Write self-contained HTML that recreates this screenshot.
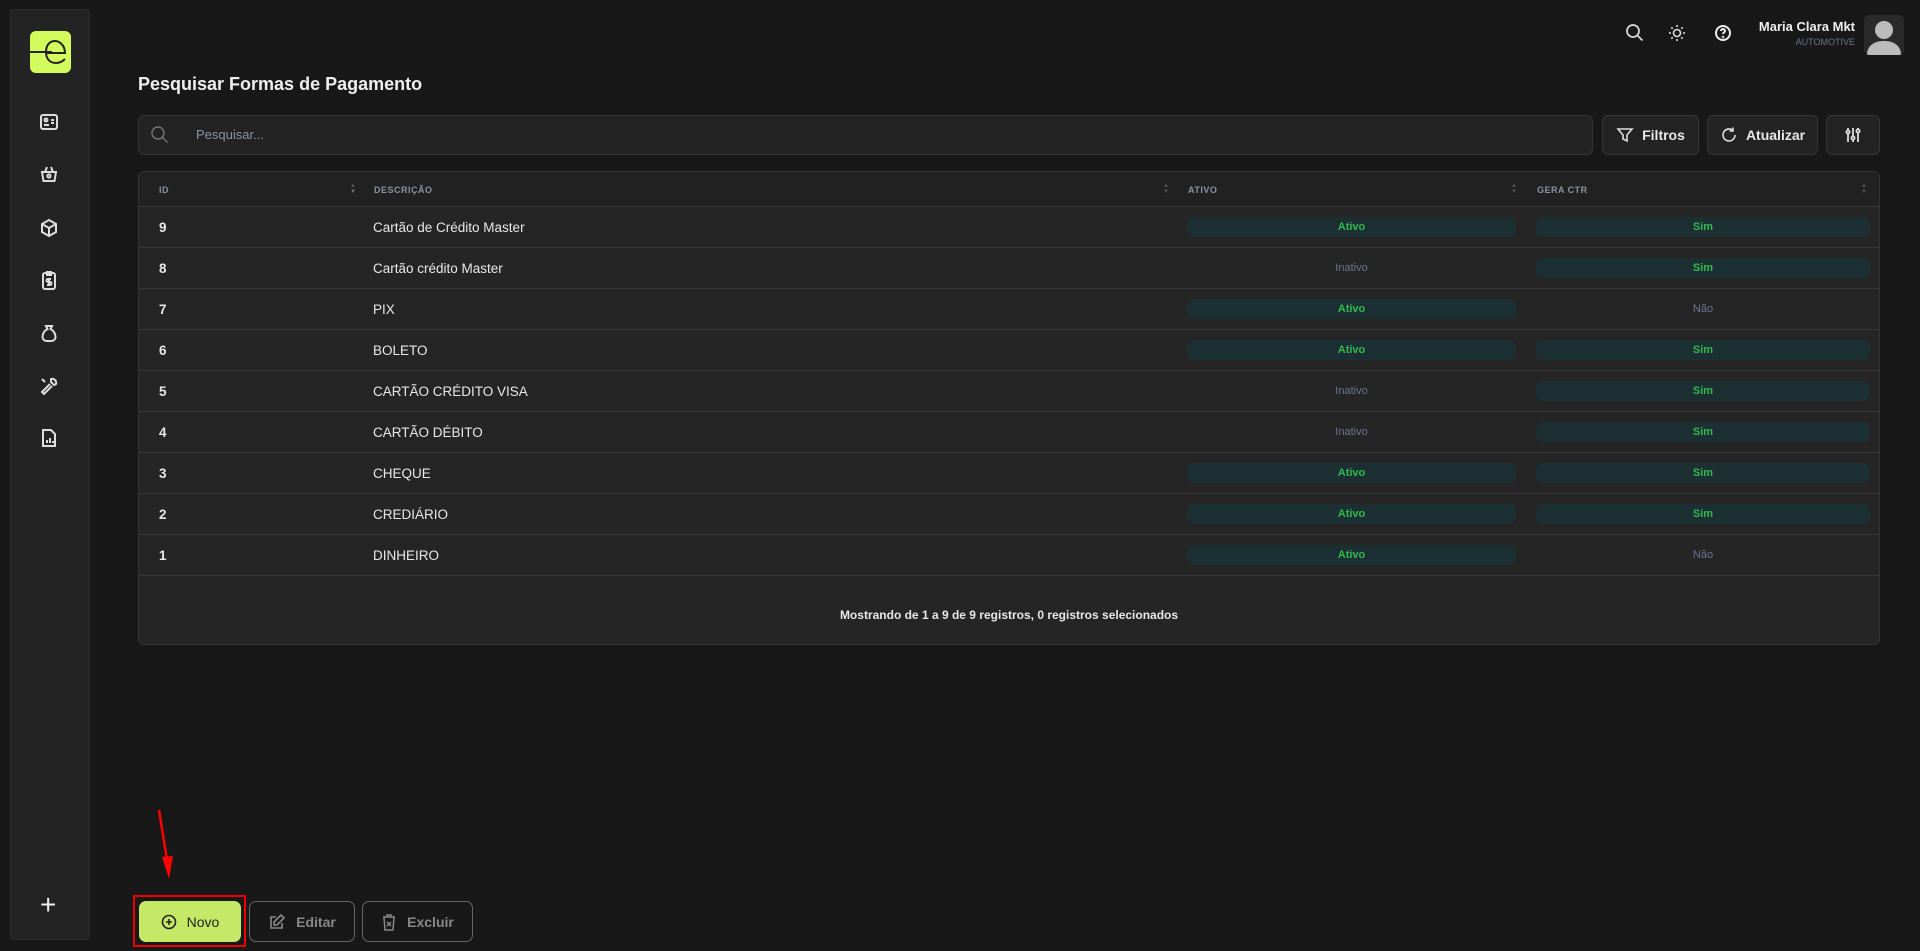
<!DOCTYPE html>
<html><head><meta charset="utf-8"><style>
*{box-sizing:border-box;margin:0;padding:0}
body{width:1920px;height:951px;background:#181818;font-family:"Liberation Sans",sans-serif;color:#e8e8e8;position:relative;overflow:hidden}
.abs{position:absolute}
.side{left:10px;top:9px;width:80px;height:931px;background:#232323;border:1px solid #2c2c2c;border-radius:4px}
.logo{left:30px;top:31px;width:41px;height:42px;background:#d4fb5c;border-radius:6px}
.ic{position:absolute;left:38px;width:22px;height:22px}
.btn{position:absolute;top:115px;height:40px;border:1px solid #363636;background:#232323;border-radius:6px;display:flex;align-items:center;justify-content:center;gap:8px;font-size:14px;font-weight:bold;color:#e8e8e8}
.table{left:138px;top:171px;width:1742px;height:474px;background:#252525;border:1px solid #343434;border-radius:6px;overflow:hidden}
.hd{position:absolute;top:0;left:0;right:0;height:35px;background:#212121;border-bottom:1px solid #383838;font-size:9px;color:#8a93a4;letter-spacing:.5px;font-weight:bold}
.hd span{position:absolute;top:13px}
.row{position:absolute;left:0;right:0;height:41px;border-bottom:1px solid #383838;font-size:13.5px}
.row .id{position:absolute;left:20px;top:13px;font-weight:bold}
.row .d{position:absolute;left:234px;top:13px}
.pill{position:absolute;top:10px;height:20px;border-radius:7px;font-size:11px;font-weight:bold;text-align:center;line-height:20px}
.p1{left:1048px;width:329px}.p2{left:1397px;width:334px}
.on{background:#1c3034;color:#31b94c}
.off{color:#6b7690;font-weight:normal}
.sort{position:absolute;top:11px;width:6px;color:#555;font-size:6px;line-height:6px}
.bb{position:absolute;top:901px;height:41px;border-radius:7px;display:flex;align-items:center;justify-content:center;gap:10px;font-size:14px;font-weight:bold}
</style></head><body>
<div class="abs side"></div>
<div class="abs logo"><svg width="41" height="42" viewBox="0 0 41 42"><line x1="0" y1="21" x2="22" y2="21" stroke="#222" stroke-width="2"/><path d="M17 22 H35 C35 14 29 10 25 10 C19 10 16 15 16 21 C16 28 20 32 26 32 C29 32 32 31 35 28" fill="none" stroke="#222" stroke-width="2"/></svg></div>
<svg class="ic" style="top:111px" viewBox="0 0 22 22" fill="none" stroke="#ddd" stroke-width="2"><rect x="3" y="4" width="16" height="14" rx="2"/><circle cx="8" cy="9" r="1.5"/><path d="M6 14h5M13 9h3M13 12h3"/></svg>
<svg class="ic" style="top:163px" viewBox="0 0 22 22" fill="none" stroke="#ddd" stroke-width="2"><path d="M4 9h14l-1.5 9h-11z"/><path d="M7 9l2-5M15 9l-2-5"/><circle cx="11" cy="13" r="1.6"/></svg>
<svg class="ic" style="top:217px" viewBox="0 0 22 22" fill="none" stroke="#ddd" stroke-width="2"><path d="M11 3l7 4v8l-7 4-7-4V7z"/><path d="M4 7l7 4 7-4M11 11v8"/></svg>
<svg class="ic" style="top:269px" viewBox="0 0 22 22" fill="none" stroke="#ddd" stroke-width="2"><rect x="5" y="4" width="12" height="16" rx="2"/><path d="M9 3h4v3H9zM13 10h-3a1.2 1.2 0 000 3h2a1.2 1.2 0 010 3H9M11 9v8"/></svg>
<svg class="ic" style="top:322px" viewBox="0 0 22 22" fill="none" stroke="#ddd" stroke-width="2"><path d="M8 4h6l-1.5 3c4 2 5 6 5 8a4 4 0 01-4 4H8.5a4 4 0 01-4-4c0-2 1-6 5-8z"/></svg>
<svg class="ic" style="top:375px" viewBox="0 0 22 22" fill="none" stroke="#ddd" stroke-width="2"><path d="M13 4a4 4 0 015 5l-2 1-3-3zM12 9l-8 8 2 2 8-8M4 4l3 3"/></svg>
<svg class="ic" style="top:427px" viewBox="0 0 22 22" fill="none" stroke="#ddd" stroke-width="2"><path d="M5 3h8l4 4v12H5z"/><path d="M9 16v-3M12 16v-5M15 16v-2"/></svg>
<div class="abs" style="left:40px;top:889px;font-size:28px;color:#eee;font-weight:300">+</div>

<svg class="abs" style="left:1625px;top:23px" width="20" height="20" viewBox="0 0 20 20" fill="none" stroke="#ddd" stroke-width="1.7"><circle cx="8" cy="8" r="6"/><path d="M12.5 12.5l5 5"/></svg>
<svg class="abs" style="left:1667px;top:23px" width="20" height="20" viewBox="0 0 20 20" fill="none" stroke="#ddd" stroke-width="1.6"><circle cx="10" cy="10" r="3.5"/><path d="M10 2v2M10 16v2M2 10h2M16 10h2M4.3 4.3l1.4 1.4M14.3 14.3l1.4 1.4M4.3 15.7l1.4-1.4M14.3 5.7l1.4-1.4"/></svg>
<svg class="abs" style="left:1713px;top:23px" width="20" height="20" viewBox="0 0 20 20" fill="none" stroke="#eee" stroke-width="2"><circle cx="10" cy="10" r="7"/><path d="M8 8a2 2 0 114 0c0 1.5-2 1.5-2 3"/><circle cx="10" cy="14" r=".4"/></svg>
<div class="abs" style="right:65px;top:19px;font-size:13px;font-weight:bold;color:#eee">Maria Clara Mkt</div>
<div class="abs" style="right:65px;top:37px;font-size:9px;color:#6b7690">AUTOMOTIVE</div>
<div class="abs" style="left:1864px;top:15px;width:40px;height:40px;background:#2a2a2a;border-radius:5px;overflow:hidden"><svg width="40" height="40" viewBox="0 0 40 40"><circle cx="20" cy="15" r="9" fill="#bbb"/><path d="M3 40c0-10 8-14 17-14s17 4 17 14z" fill="#bbb"/></svg></div>

<div class="abs" style="left:138px;top:74px;font-size:18px;font-weight:bold;color:#eee">Pesquisar Formas de Pagamento</div>
<div class="abs" style="left:138px;top:115px;width:1455px;height:40px;background:#232323;border:1px solid #333;border-radius:6px"></div>
<svg class="abs" style="left:150px;top:125px" width="20" height="20" viewBox="0 0 20 20" fill="none" stroke="#777" stroke-width="1.4"><circle cx="8" cy="8" r="6"/><path d="M12.5 12.5l5 5"/></svg>
<div class="abs" style="left:196px;top:127px;font-size:13px;color:#8a93a4">Pesquisar...</div>
<div class="btn" style="left:1602px;width:97px"><svg width="18" height="18" viewBox="0 0 18 18" fill="none" stroke="#ddd" stroke-width="1.6"><path d="M2 3h14l-5 6v6l-4-2V9z"/></svg>Filtros</div>
<div class="btn" style="left:1707px;width:111px"><svg width="18" height="18" viewBox="0 0 18 18" fill="none" stroke="#ddd" stroke-width="1.6"><path d="M15 9a6 6 0 11-2-4.5M13 1.5v3.5h-3.5"/></svg>Atualizar</div>
<div class="btn" style="left:1826px;width:54px"><svg width="18" height="18" viewBox="0 0 18 18" fill="none" stroke="#ddd" stroke-width="1.8"><path d="M4 2v14M9 2v14M14 2v14"/><circle cx="4" cy="6" r="1.6" fill="#232323"/><circle cx="9" cy="12" r="1.6" fill="#232323"/><circle cx="14" cy="5" r="1.6" fill="#232323"/></svg></div>

<div class="abs table">
<div class="hd"><span style="left:20px">ID</span><span style="left:235px">DESCRIÇÃO</span><span style="left:1049px">ATIVO</span><span style="left:1398px">GERA CTR</span>
<div class="sort" style="left:211px">▲<br><span style="position:static;color:#6b7690">▼</span></div><div class="sort" style="left:1024px">▲<br>▼</div><div class="sort" style="left:1372px">▲<br>▼</div><div class="sort" style="left:1722px">▲<br>▼</div></div>
<div class="row" style="top:35px"><span class="id">9</span><span class="d">Cartão de Crédito Master</span><div class="pill p1 on">Ativo</div><div class="pill p2 on">Sim</div></div>
<div class="row" style="top:76px"><span class="id">8</span><span class="d">Cartão crédito Master</span><div class="pill p1 off">Inativo</div><div class="pill p2 on">Sim</div></div>
<div class="row" style="top:117px"><span class="id">7</span><span class="d">PIX</span><div class="pill p1 on">Ativo</div><div class="pill p2 off">Não</div></div>
<div class="row" style="top:158px"><span class="id">6</span><span class="d">BOLETO</span><div class="pill p1 on">Ativo</div><div class="pill p2 on">Sim</div></div>
<div class="row" style="top:199px"><span class="id">5</span><span class="d">CARTÃO CRÉDITO VISA</span><div class="pill p1 off">Inativo</div><div class="pill p2 on">Sim</div></div>
<div class="row" style="top:240px"><span class="id">4</span><span class="d">CARTÃO DÉBITO</span><div class="pill p1 off">Inativo</div><div class="pill p2 on">Sim</div></div>
<div class="row" style="top:281px"><span class="id">3</span><span class="d">CHEQUE</span><div class="pill p1 on">Ativo</div><div class="pill p2 on">Sim</div></div>
<div class="row" style="top:322px"><span class="id">2</span><span class="d">CREDIÁRIO</span><div class="pill p1 on">Ativo</div><div class="pill p2 on">Sim</div></div>
<div class="row" style="top:363px"><span class="id">1</span><span class="d">DINHEIRO</span><div class="pill p1 on">Ativo</div><div class="pill p2 off">Não</div></div>
<div class="abs" style="left:0;right:0;top:436px;text-align:center;font-size:12px;font-weight:bold">Mostrando de 1 a 9 de 9 registros, 0 registros selecionados</div>
</div>

<svg class="abs" style="left:150px;top:805px" width="30" height="80" viewBox="0 0 30 80"><path d="M9 5L17 55" stroke="#f00" stroke-width="2.5"/><path d="M12 52L23 51L19 74z" fill="#f00"/></svg>
<div class="abs" style="left:133px;top:895px;width:113px;height:52px;border:2px solid #e00"></div>
<div class="bb" style="left:139px;width:102px;background:#c5e866;color:#222;font-weight:normal"><svg width="16" height="16" viewBox="0 0 16 16" fill="none" stroke="#222" stroke-width="1.6"><circle cx="8" cy="8" r="6.5"/><path d="M8 5v6M5 8h6"/></svg>Novo</div>
<div class="bb" style="left:249px;width:106px;border:1px solid #666;color:#888"><svg width="18" height="18" viewBox="0 0 18 18" fill="none" stroke="#888" stroke-width="1.6"><path d="M8 4H3v11h11v-5M13 2l3 3-7 7H6V9z"/></svg>Editar</div>
<div class="bb" style="left:362px;width:111px;border:1px solid #666;color:#888"><svg width="16" height="18" viewBox="0 0 16 18" fill="none" stroke="#888" stroke-width="1.5"><path d="M2 4h12M6 4V2h4v2M3 4l1 13h8l1-13M6 9l4 4M10 9l-4 4"/></svg>Excluir</div>
</body></html>
